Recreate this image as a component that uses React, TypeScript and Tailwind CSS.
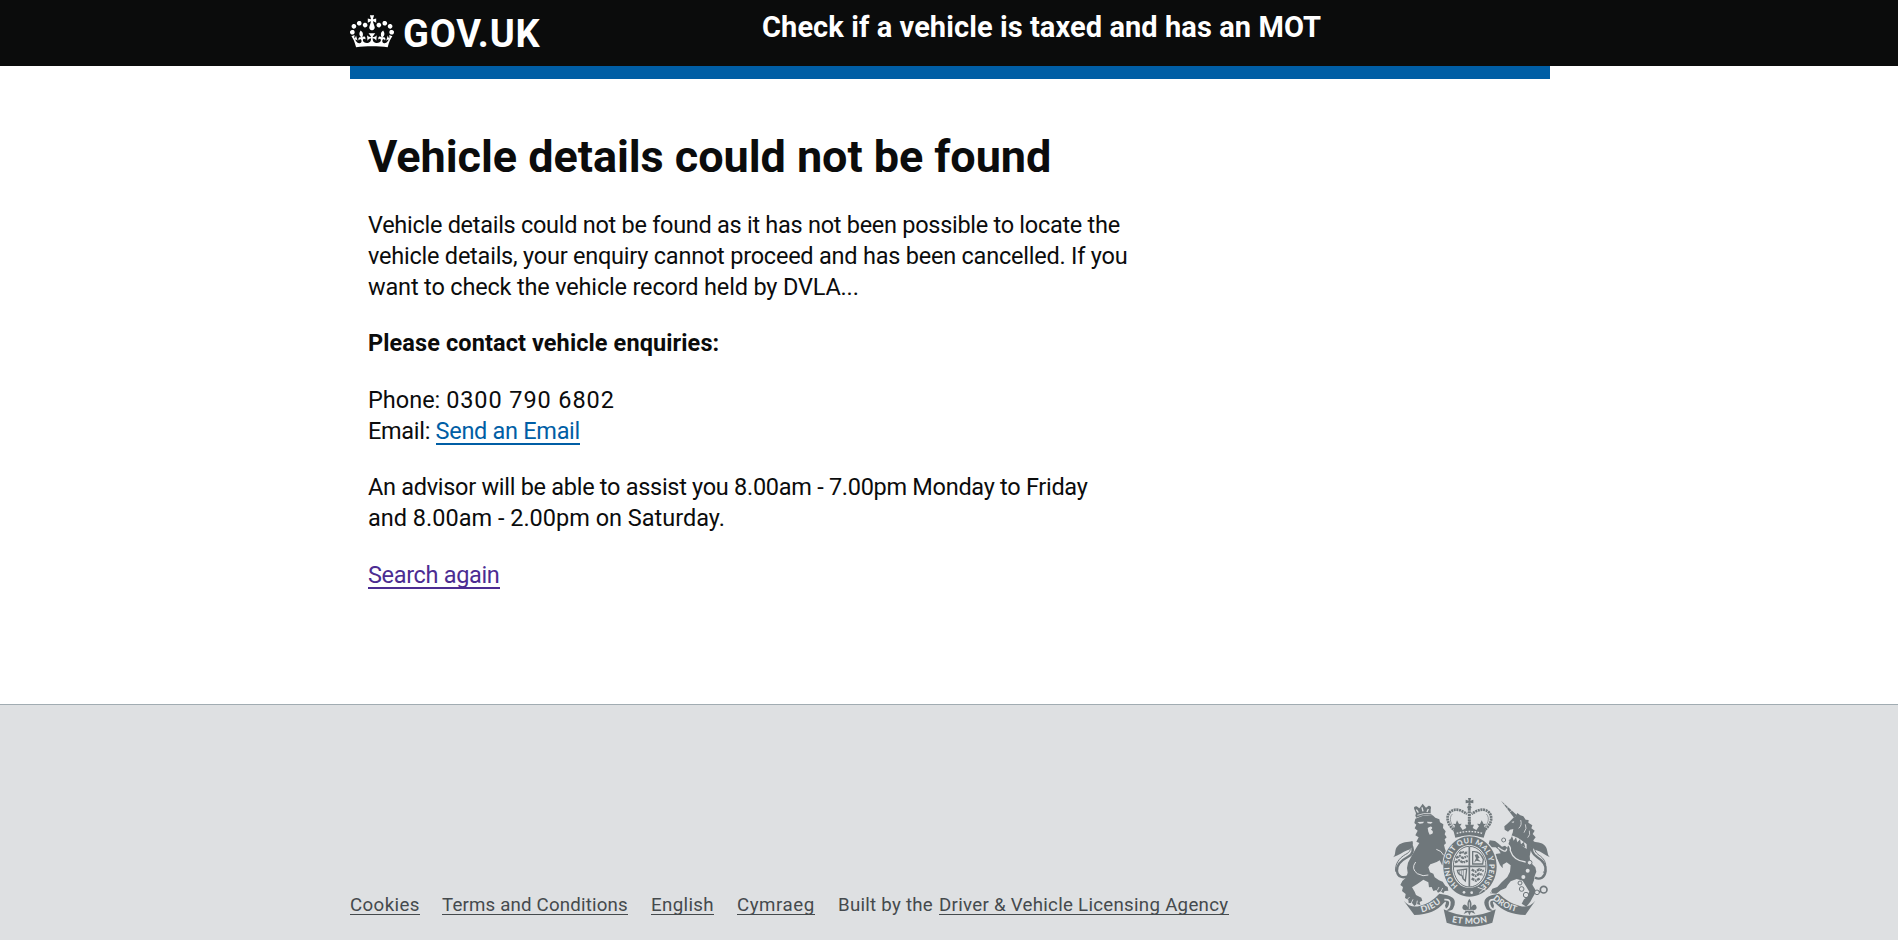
import React from "react";

function Crown() {
  return (
    <svg viewBox="0 0 132 97" className="h-[33px] w-[44px] shrink-0" fill="#fff" aria-hidden="true">
      <path d="M25 30.2c3.5 1.5 7.7-.2 9.1-3.7 1.5-3.6-.2-7.8-3.9-9.2-3.6-1.4-7.6.3-9.1 3.9-1.4 3.5.3 7.5 3.9 9zM9 39.5c3.6 1.5 7.8-.2 9.2-3.7 1.5-3.6-.2-7.8-3.9-9.1-3.6-1.5-7.6.2-9.1 3.8-1.4 3.5.3 7.5 3.8 9zM4.4 57.2c3.5 1.5 7.7-.2 9.1-3.8 1.5-3.6-.2-7.7-3.9-9.1-3.5-1.5-7.6.3-9.1 3.8-1.4 3.5.3 7.6 3.9 9.1zm38.3-21.4c3.5 1.5 7.7-.2 9.1-3.8 1.5-3.6-.2-7.7-3.9-9.1-3.6-1.5-7.6.3-9.1 3.8-1.3 3.6.4 7.7 3.9 9.1zm64.4-5.6c-3.6 1.5-7.8-.2-9.1-3.7-1.5-3.6.2-7.8 3.8-9.2 3.6-1.4 7.7.3 9.2 3.9 1.3 3.5-.4 7.5-3.9 9zm15.9 9.3c-3.6 1.5-7.7-.2-9.1-3.7-1.5-3.6.2-7.8 3.7-9.1 3.6-1.5 7.7.2 9.2 3.8 1.5 3.5-.3 7.5-3.8 9zm4.7 17.7c-3.6 1.5-7.8-.2-9.2-3.8-1.5-3.6.2-7.7 3.9-9.1 3.6-1.5 7.7.3 9.2 3.8 1.3 3.5-.4 7.6-3.9 9.1zM89.3 35.8c-3.6 1.5-7.8-.2-9.2-3.8-1.4-3.6.2-7.7 3.9-9.1 3.6-1.5 7.7.3 9.2 3.8 1.4 3.6-.3 7.7-3.9 9.1zM69.7 17.7l8.9 4.7V9.3l-8.9 2.8c-.2-.3-.5-.6-.9-.9L72.4 0H59.6l3.5 11.2c-.3.3-.6.5-.9.9l-8.8-2.8v13.1l8.8-4.7c.3.3.6.7.9.9l-5 15.4v.1c-.2.8-.4 1.6-.4 2.4 0 4.1 3.1 7.5 7 8.1h.2c.3 0 .7.1 1 .1.4 0 .7 0 1-.1h.2c4-.6 7.1-4.1 7.1-8.1 0-.8-.1-1.7-.4-2.4V34l-5.1-15.4c.4-.2.7-.6 1-.9zM66 92.8c16.9 0 32.8 1.1 47.1 3.2 4-16.9 8.9-26.7 14-33.5l-9.6-3.4c1 4.9 1.1 7.2 0 10.2-1.5-1.4-3-4.3-4.2-8.7L108.6 76c2.8-2 5-3.2 7.5-3.3-4.4 9.4-10 11.9-13.6 11.2-4.3-.8-6.3-4.6-5.6-7.9 1-4.7 5.7-5.9 8-.5 4.3-8.7-3-11.4-7.6-8.8 7.1-7.2 7.9-13.5 2.1-21.1-8 6.1-8.1 12.3-4.5 20.8-4.7-5.4-12.1-2.5-9.5 6.2 3.4-5.2 7.9-2 7.2 3.1-.6 4.3-6.4 7.8-13.5 7.2-10.3-.9-10.9-8-11.2-13.8 2.5-.5 7.1 1.8 11 7.3L80.2 60c-4.1 4.4-8 5.3-12.3 5.4 1.4-4.4 8-11.6 8-11.6H55.5s6.4 7.2 7.9 11.6c-4.2-.1-8-1-12.3-5.4l1.4 16.4c3.9-5.5 8.5-7.7 10.9-7.3-.3 5.8-.9 12.8-11.1 13.8-7.2.6-12.9-2.9-13.5-7.2-.7-5 3.8-8.3 7.1-3.1 2.7-8.7-4.6-11.6-9.4-6.2 3.7-8.5 3.6-14.7-4.6-20.8-5.8 7.6-5 13.9 2.2 21.1-4.7-2.6-11.9.1-7.7 8.8 2.3-5.5 7.1-4.2 8.1.5.7 3.3-1.3 7.1-5.7 7.9-3.5.7-9-1.8-13.5-11.2 2.5.1 4.7 1.3 7.5 3.3l-4.7-15.4c-1.2 4.4-2.7 7.2-4.3 8.7-1.1-3-.9-5.3 0-10.2l-9.5 3.4c5 6.9 9.9 16.7 14 33.5 14.8-2.1 30.8-3.2 47.7-3.2z" />
    </svg>
  );
}

const INK = "#6f777b";
const PAPER = "#dee0e2";

function RoyalArms() {
  return (
    <svg viewBox="39 39 471 387" className="h-[129px] w-[157px] shrink-0" fill={INK} role="img" aria-label="Royal coat of arms">
      <defs>
        <path id="motto" d="M234 302A60 70 0 1 1 302 302" />
        <path id="dieu" d="M125 382Q163 374 192 345" />
        <path id="droit" d="M338 342Q367 371 415 382" />
        <path id="et-mon" d="M215 411Q268 423 325 411" />
      </defs>

      {/* lion: tail, crown, mane and body */}
      <g>
        <path d="M39 217C50 208 41 194 54 182C66 170 84 172 97 168C102 176 96 192 82 196C68 201 57 211 39 217Z" />
        <path d="M92 178C103 192 99 208 83 216C62 227 49 240 51 258C53 276 69 281 86 273" fill="none" stroke={INK} strokeWidth="7" />
        <path d="M85 181C96 191 90 202 77 208C57 219 44 238 47 260" fill="none" stroke={INK} strokeWidth="3" />
        <path d="M108 85L103 73Q99 64 110 64L118 70L121 66L128 56L134 64L138 68L146 62Q156 63 152 73L152 85L157 92Q132 88 109 98L106 92Z" />
        <path d="M109 74L115 83M126 67L129 79M145 72L141 81" stroke={PAPER} strokeWidth="4" />
        <path d="M112 91Q130 83 153 86" stroke={PAPER} strokeWidth="2.5" fill="none" />
        <path d="M106 101L127 93L158 91L166 98L178 103L180 112L190 118L189 129L197 139L194 148L200 157L194 163L198 175L192 180L195 192L201 207L211 215L207 230L215 244L206 250L202 260L196 244L186 240L179 226L170 231L160 235L151 238L145 247L150 262L160 266L164 277L177 286L188 290L196 302L203 306L205 317L194 318L190 325L182 319L174 323L169 315L160 318L155 306L147 307L145 292L130 284L112 297L96 307L104 320L108 330L124 338L127 347L119 351L121 360L110 357L103 363L96 354L86 354L85 344L75 339L77 327L66 318L69 306L61 300L67 288L79 277L83 263L81 249L84 233L96 211L108 190L118 174L109 170L116 157L106 151L113 137L104 130L109 119L103 114Z" />
        <path d="M112 111L132 110L129 115L119 116ZM141 110L158 111L153 116L143 115ZM143 129Q155 120 157 129L153 134Q162 138 157 146L149 149L145 140Z" fill={PAPER} />
        <path d="M107 231Q92 251 112 266Q130 276 145 270M169 193Q185 197 191 211" fill="none" stroke={PAPER} strokeWidth="3" />
        <path d="M183 319L188 309M172 316L177 306M94 354L99 343M82 343L89 336M110 357L112 347" stroke={PAPER} strokeWidth="2.5" />
      </g>

      {/* imperial crown */}
      <g>
        <path d="M264 39H273L271 47L280 44V55L271 53L273 61H264L266 53L257 55V44L266 47Z" />
        <circle cx="268" cy="67" r="6" />
        <path d="M268 71V132" stroke={INK} strokeWidth="9" strokeDasharray="6 2" />
        <path d="M227 138C203 123 195 94 211 80C226 68 246 76 261 87M309 138C334 123 341 94 325 80C310 68 290 76 275 87" fill="none" stroke={INK} strokeWidth="8" strokeDasharray="6 2" />
        <path d="M229 136C212 119 205 99 217 87M307 136C324 119 331 99 319 87" fill="none" stroke={INK} strokeWidth="2" />
        <path d="M220 136L225 122L218 116L227 117L231 106L237 117L245 116L240 124L248 135L259 129L255 119H265V109H272V119H282L278 129L289 135L297 124L291 116L300 117L305 106L311 117L319 116L312 122L318 136L311 158Q268 146 226 158Z" />
        <path d="M230 145Q268 134 307 145" fill="none" stroke={PAPER} strokeWidth="4" strokeDasharray="5 4" />
      </g>

      {/* unicorn */}
      <g>
        <path d="M363 47L411 91L402 98Z" />
        <path d="M371 61L377 57M380 71L386 66M389 81L396 76" stroke={PAPER} strokeWidth="2" />
        <path d="M400 98L407 94L412 84L421 91L430 94L437 104L446 105L445 113L457 121L454 130L464 137L458 147L467 157L460 166L463 177L456 186L452 199L449 214L451 232L466 247L469 260L464 273L462 286L457 299L466 314L464 327L457 339L451 350L439 365L425 356L432 343L443 335L448 320L438 304L428 287L410 282L392 289L383 300L378 309L362 316L349 326L330 325L337 311L352 306L365 292L382 276L390 260L392 241L380 232L368 239L368 250L360 240L353 224L345 215L347 207L362 205L356 194L347 187L334 187L326 176L329 166L345 168L354 175L366 185L375 182L382 188L387 172L393 155L398 143L400 132L390 134L384 140L374 134L373 124L382 116L393 106Z" />
        <path d="M394 111L403 109L400 114Z" fill={PAPER} />
        <path d="M422 105Q427 121 416 130M436 118Q442 130 432 143M448 137Q452 150 443 158" stroke={PAPER} strokeWidth="2.5" fill="none" />
        <path d="M388 149Q414 154 440 178L440 192Q414 170 385 165Z" fill={PAPER} />
        <path d="M391 163L396 153L401 167L408 157L412 172L420 163L423 178L431 171L436 187L385 166Z" />
        <circle cx="371" cy="165" r="6" fill={PAPER} stroke={INK} strokeWidth="3" />
        <path d="M354 187C370 200 379 203 380 191M373 173Q394 180 391 197Q401 228 437 231" fill="none" stroke={PAPER} strokeWidth="4" />
        <g fill={PAPER}>
          <circle cx="443" cy="257" r="6" />
          <circle cx="430" cy="276" r="6" />
        </g>
        <g fill="none" stroke={INK} strokeWidth="3">
          <circle cx="449" cy="233" r="7" fill={PAPER} />
          <circle cx="420" cy="294" r="6" fill={PAPER} />
          <circle cx="425" cy="312" r="7" />
          <circle cx="438" cy="330" r="8" />
          <circle cx="471" cy="322" r="7" />
          <circle cx="491" cy="314" r="10" strokeWidth="5" />
          <path d="M446 326Q456 319 464 323M477 322L482 319" strokeWidth="5" />
        </g>
        <path d="M510 217C500 208 505 194 495 182C485 170 468 174 457 168C452 176 456 192 469 196C484 200 495 211 510 217Z" />
        <path d="M461 180C451 194 457 207 472 217C491 229 499 240 497 258C494 277 481 286 465 278" fill="none" stroke={INK} strokeWidth="7" />
        <path d="M467 185C460 197 470 206 482 214C500 228 501 248 490 263" fill="none" stroke={INK} strokeWidth="3" />
      </g>

      {/* garter with motto */}
      <path d="M268 151C311 151 354 191 354 244C354 298 317 337 268 337C222 337 187 298 187 244C187 191 226 151 268 151Z" fill={PAPER} />
      <path fillRule="evenodd" d="M268 154C311 154 350 193 350 244C350 295 314 335 268 335C225 335 190 295 190 244C190 193 227 154 268 154ZM268 180C240 180 216 208 216 244C216 281 238 309 268 309C299 309 322 281 322 244C322 208 297 180 268 180Z" />
      <text fill={PAPER} fontFamily="Lato, sans-serif" fontWeight="900" fontSize="22">
        <textPath href="#motto" textLength="336">HONI SOIT QUI MAL Y PENSE</textPath>
      </text>
      <circle cx="252" cy="322" r="4" fill={PAPER} />
      <circle cx="275" cy="323" r="4" fill={PAPER} />
      <path d="M293 307L336 322M298 324L318 306" stroke={PAPER} strokeWidth="3" />

      {/* quartered shield */}
      <path d="M268 184C241 184 220 211 220 244C220 278 241 306 268 306C296 306 318 278 318 244C318 211 296 184 268 184Z" fill={PAPER} stroke={INK} strokeWidth="3" />
      <path d="M268 186V305M221 244H317" stroke={INK} strokeWidth="5" />
      <path d="M238 206L246 200L255 205L263 200M228 219L239 213L249 219L263 213M225 232L237 226L249 233L263 227M275 254L287 260L298 253L311 258M275 267L287 273L298 266L308 270M275 281L288 287L300 280" fill="none" stroke={INK} strokeWidth="7" strokeDasharray="9 2 5 2" />
      <path d="M278 200Q300 197 310 223L308 237H278Z" fill="none" stroke={INK} strokeWidth="4" />
      <path d="M284 210L292 207L299 218L293 221L303 230L289 227L282 233L288 220Z" />
      <path d="M232 256L260 252L256 288Q247 282 246 272Q234 268 232 256Z" fill="none" stroke={INK} strokeWidth="4" />
      <path d="M238 257V268M244 256V270M250 255V279" stroke={INK} strokeWidth="2" />

      {/* ribbon and plant badge */}
      <path d="M71 347Q91 370 119 363Q153 354 178 326Q206 329 219 339Q230 350 220 369Q217 379 200 377L195 362Q202 345 192 353Q164 388 103 390Z" />
      <path d="M466 347Q447 370 420 363Q385 354 357 326Q330 329 319 339Q307 350 318 369Q321 379 338 377L342 362Q334 344 345 353Q376 388 436 390Z" />
      <path d="M193 344Q214 342 209 360Q207 370 198 374M344 344Q324 342 329 360Q331 370 340 374" fill="none" stroke={PAPER} strokeWidth="5" />
      <path d="M191 373Q229 392 268 392Q309 392 347 373L337 413Q302 425 268 425Q235 425 200 413Z" />
      <path d="M268 341Q259 354 264 366Q250 351 247 367Q247 376 258 376L251 387L264 381L268 391L273 381L286 387L279 376Q290 376 290 367Q287 351 273 366Q278 354 268 341Z" />
      <path d="M268 352V372M258 376H279" stroke={PAPER} strokeWidth="2.5" fill="none" />
      <g fill={PAPER} fontFamily="Lato, sans-serif" fontWeight="900">
        <text fontSize="26">
          <textPath href="#dieu" textLength="66">DIEU</textPath>
        </text>
        <text fontSize="25">
          <textPath href="#droit" textLength="80">DROIT</textPath>
        </text>
        <text fontSize="26">
          <textPath href="#et-mon" textLength="108">ET MON</textPath>
        </text>
      </g>
    </svg>
  );
}

function FooterLink({ children, className }: { children: React.ReactNode; className: string }) {
  return (
    <a href="#" className={`inline-block h-[22px] border-b border-[#454a4d] leading-[25px] ${className}`}>
      {children}
    </a>
  );
}

export default function App() {
  return (
    <div className="flex h-[940px] flex-col overflow-hidden bg-white font-[Roboto,sans-serif] text-[#0b0c0c]">
      <header className="h-[66px] shrink-0 bg-[#0b0c0c] pl-[2px] text-white">
        <div className="mx-auto flex w-[1200px] items-start">
          <a href="#" className="flex w-[412px] items-start pt-[15px]">
            <Crown />
            <span className="ml-[9px] text-[38px] leading-[39px] font-bold tracking-[0.8px]">GOV.UK</span>
          </a>
          <p className="pt-[9px] text-[29px] leading-[36px] font-bold tracking-[0.08px]">
            Check if a vehicle is taxed and has an MOT
          </p>
        </div>
      </header>

      <div className="shrink-0 pl-[2px]">
        <div className="mx-auto h-[13px] w-[1200px] bg-[#005ea5]" />
      </div>

      <div className="h-[625px] shrink-0 pl-[2px]">
        <main className="mx-auto w-[1200px] px-[18px] pt-[53px]">
          <h1 className="text-[45px] leading-[50px] font-bold tracking-[-0.06px]">
            Vehicle details could not be found
          </h1>
          <div className="mt-[27.5px] flex flex-col gap-[25px] text-[23.5px] leading-[31.25px] whitespace-nowrap">
            <p>
              <span className="block tracking-[-0.28px]">
                Vehicle details could not be found as it has not been possible to locate the
              </span>
              <span className="block tracking-[-0.225px]">
                vehicle details, your enquiry cannot proceed and has been cancelled. If you
              </span>
              <span className="block tracking-[-0.17px]">want to check the vehicle record held by DVLA...</span>
            </p>
            <p className="font-bold tracking-[0.1px]">Please contact vehicle enquiries:</p>
            <p>
              <span className="block">
                Phone: <span className="tracking-[0.9px]">0300 790 6802</span>
              </span>
              <span className="block tracking-[-0.3px]">
                Email:{" "}
                <a href="#" className="inline-block h-[29px] border-b-2 border-[#005ea5] text-[#005ea5]">
                  Send an Email
                </a>
              </span>
            </p>
            <p>
              <span className="block tracking-[-0.285px]">
                An advisor will be able to assist you 8.00am - 7.00pm Monday to Friday
              </span>
              <span className="block">and 8.00am - 2.00pm on Saturday.</span>
            </p>
            <p>
              <a href="#" className="inline-block h-[29px] border-b-2 border-[#4c2c92] tracking-[-0.33px] text-[#4c2c92]">
                Search again
              </a>
            </p>
          </div>
        </main>
      </div>

      <footer className="grow border-t border-[#a1acb2] bg-[#dee0e2] pl-[2px] text-[#454a4d]">
        <div className="mx-auto flex w-[1200px] items-start justify-between pt-[93px]">
          <div className="flex pt-[95px] text-[18.7px] leading-[25px] whitespace-nowrap">
            <FooterLink className="w-[70px] tracking-[0.4px]">Cookies</FooterLink>
            <FooterLink className="ml-[22px] w-[186px] tracking-[0.18px]">Terms and Conditions</FooterLink>
            <FooterLink className="ml-[23px] w-[63px] tracking-[0.35px]">English</FooterLink>
            <FooterLink className="ml-[23px] w-[78px] tracking-[0.55px]">Cymraeg</FooterLink>
            <span className="ml-[23px] w-[101px] tracking-[0.25px]">Built by the</span>
            <FooterLink className="w-[290px] tracking-[0.28px]">Driver &amp; Vehicle Licensing Agency</FooterLink>
          </div>
          <RoyalArms />
        </div>
      </footer>
    </div>
  );
}
